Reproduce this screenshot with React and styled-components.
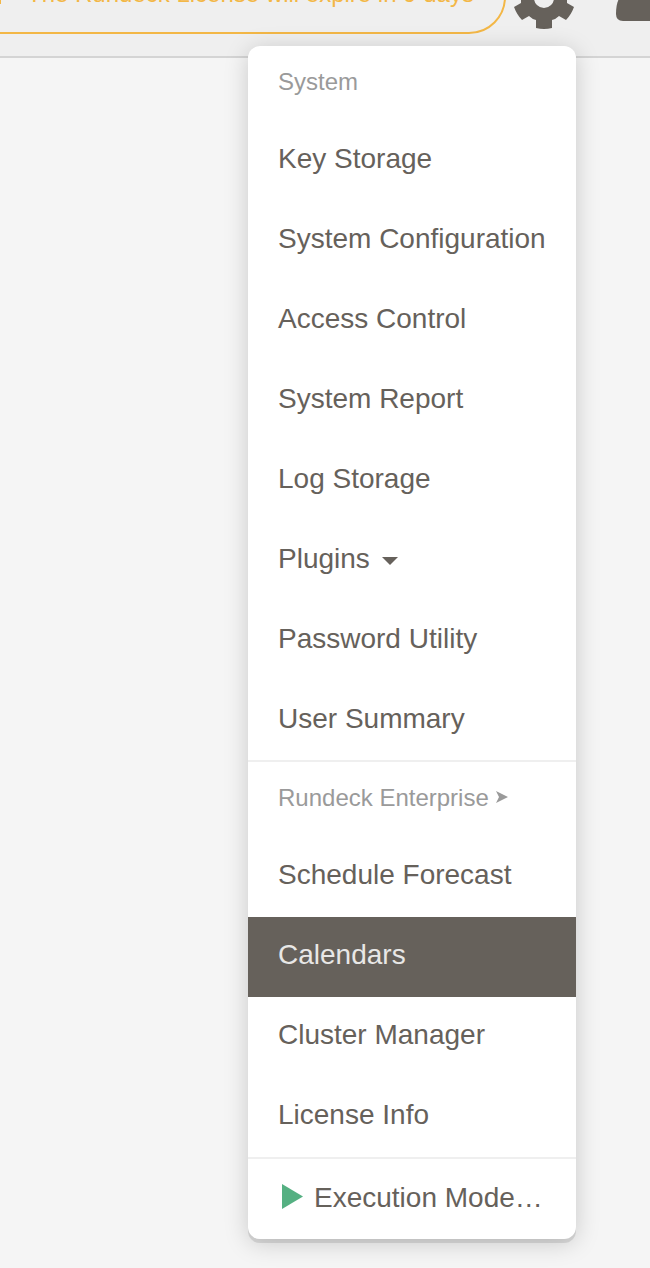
import React from "react";
import styled, { createGlobalStyle } from "styled-components";

const GlobalStyle = createGlobalStyle`
  * { box-sizing: border-box; }
  html, body { margin: 0; height: 100%; overflow: hidden; background: #f5f5f5; }
  body { font-family: "Liberation Sans", Arial, Helvetica, sans-serif; color: #66615b; }
`;

const Page = styled.div`
  position: relative;
  height: 1268px;
  overflow: hidden;
  background: #f5f5f5;
`;

const TopBar = styled.header`
  display: flex;
  align-items: flex-start;
  height: 58px;
  background: #efefef;
  border-bottom: 2px solid #d4d4d4;
`;

const LicensePill = styled.div`
  flex: none;
  display: flex;
  align-items: center;
  width: 541px;
  height: 74px;
  margin: -40px 0 0 -35px;
  padding: 0 0 6px 33px;
  border: 2px solid #f3b746;
  border-radius: 37px;
  color: #f3b746;
  font-size: 24px;
  white-space: nowrap;
`;

const PillMark = styled.span`
  width: 1px;
  height: 20px;
  margin-right: 26px;
  background: #f3b746;
`;

const GearIcon = styled.svg`
  flex: none;
  width: 60px;
  height: 60px;
  margin: -31px 0 0 8px;
  fill: #66615b;
`;

const UserIcon = styled.svg`
  flex: none;
  width: 56px;
  height: 60px;
  margin: -39px 0 0 42px;
  fill: #66615b;
`;

const Menu = styled.nav`
  position: absolute;
  top: 46px;
  left: 248px;
  width: 328px;
  height: 1193px;
  background: #fff;
  border-radius: 12px;
  box-shadow: 0 4px 0 rgba(0, 0, 0, 0.1), 0 4px 24px rgba(0, 0, 0, 0.18);
`;

const Heading = styled.div`
  display: flex;
  align-items: center;
  gap: 7px;
  height: ${(p) => p.$height}px;
  padding: 0 30px ${(p) => p.$lift || 2}px;
  color: #9a9a9a;
  font-size: 24px;
  line-height: 28px;
`;

const Item = styled.div`
  display: flex;
  align-items: center;
  height: 80px;
  padding: 0 30px ${(p) => p.$lift || 3}px;
  font-size: 28px;
  line-height: 32px;
  white-space: nowrap;
  background: ${(p) => (p.$active ? "#66615b" : "transparent")};
  color: ${(p) => (p.$active ? "#e8e7e6" : "#66615b")};
`;

const Divider = styled.div`
  height: 2px;
  background: #efefef;
`;

const Caret = styled.svg`
  width: 16px;
  height: 8px;
  margin: 4px 0 0 12px;
  fill: #66615b;
`;

const Arrow = styled.svg`
  width: 12px;
  height: 12px;
  margin-bottom: 2px;
  fill: #9a9a9a;
`;

const Play = styled.svg`
  width: 21px;
  height: 25px;
  margin: 0 11px 2px 4px;
  fill: #55b082;
`;

const systemItems = [
  "Key Storage",
  "System Configuration",
  "Access Control",
  "System Report",
  "Log Storage",
  "Plugins",
  "Password Utility",
  "User Summary",
];

const enterpriseItems = ["Schedule Forecast", "Calendars", "Cluster Manager", "License Info"];

export default function App() {
  return (
    <>
      <GlobalStyle />
      <Page>
        <TopBar>
          <LicensePill>
            <PillMark />
            The Rundeck License will expire in 9 days
          </LicensePill>
          <GearIcon viewBox="-30 -30 60 60">
            <path
              fillRule="evenodd"
              d="M-8-29Q0-31 8-29V-20L15-17L21-21Q28-15 30-7L23-3V4L30 8Q27 16 22 21L15 17Q12 20 8 21V29Q0 31-8 29V21Q-12 20-15 17L-22 21Q-27 16-30 8L-23 4V-3L-30-7Q-28-15-21-21L-15-17L-8-20ZM0-11A10 10 0 1 0 0 9A10 10 0 1 0 0-11Z"
            />
          </GearIcon>
          <UserIcon viewBox="0 0 56 60">
            <circle cx="28" cy="15" r="14" />
            <path d="M7 60Q0 60 0 53Q0 32 14 30H42Q56 32 56 53Q56 60 49 60Z" />
          </UserIcon>
        </TopBar>
        <Menu>
          <Heading $height={74}>System</Heading>
          {systemItems.map((label) => (
            <Item key={label}>
              {label}
              {label === "Plugins" && (
                <Caret viewBox="0 0 16 8">
                  <path d="M0 0H16L8 8Z" />
                </Caret>
              )}
            </Item>
          ))}
          <Divider />
          <Heading $height={75} $lift={4}>
            Rundeck Enterprise
            <Arrow viewBox="0 0 12 12">
              <path d="M0 0L12 6L0 12L3 6Z" />
            </Arrow>
          </Heading>
          {enterpriseItems.map((label) => (
            <Item key={label} $lift={5} $active={label === "Calendars"}>
              {label}
            </Item>
          ))}
          <Divider />
          <Item>
            <Play viewBox="0 0 21 25">
              <path d="M0 0L21 12.5L0 25Z" />
            </Play>
            Execution Mode…
          </Item>
        </Menu>
      </Page>
    </>
  );
}
